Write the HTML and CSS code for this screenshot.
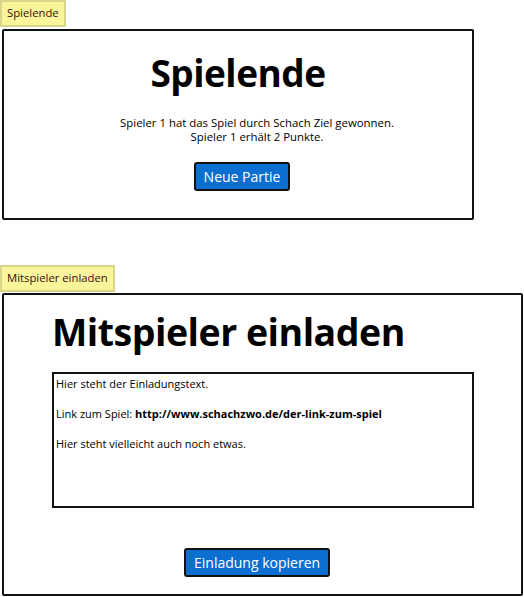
FILE: index.html
```html
<!DOCTYPE html>
<html lang="de">
<head>
<meta charset="utf-8">
<title>Spielende</title>
<link rel="stylesheet" href="styles.css">
</head>
<body>
<div class="page">
  <div class="label">Spielende</div>
  <section class="panel panel-end">
    <h1 class="title title-center">Spielende</h1>
    <p class="msg">Spieler 1 hat das Spiel durch Schach Ziel gewonnen.<br>Spieler 1 erhält 2 Punkte.</p>
    <div class="btn-row"><button class="btn">Neue Partie</button></div>
  </section>

  <div class="label label-2">Mitspieler einladen</div>
  <section class="panel panel-invite">
    <h1 class="title title-left">Mitspieler einladen</h1>
    <div class="textbox">
      <p>Hier steht der Einladungstext.</p>
      <p>Link zum Spiel: <b>http://www.schachzwo.de/der-link-zum-spiel</b></p>
      <p>Hier steht vielleicht auch noch etwas.</p>
    </div>
    <div class="btn-row-2"><button class="btn">Einladung kopieren</button></div>
  </section>
</div>
</body>
</html>
```

FILE: styles.css
```css
* { box-sizing: border-box; }
html, body { margin: 0; padding: 0; background: #fff; }
body {
  font-family: "Open Sans", "Noto Sans", sans-serif;
  color: #000;
  width: 524px;
  height: 597px;
  overflow: hidden;
}
.page {
  display: flex;
  flex-direction: column;
  align-items: flex-start;
}
.label {
  background: #f8f59b;
  border: 2px solid #d9d68c;
  color: #3a0d0d;
  font-size: 11.3px;
  line-height: 14px;
  padding: 4px 5px 5px 5px;
  height: 27px;
  display: flex;
  align-items: center;
}
.label-2 { margin-top: 45px; height: 27px; }
.panel {
  margin-top: 2px;
  margin-left: 2px;
  border: 2px solid #111;
  border-radius: 2px;
  display: flex;
  flex-direction: column;
}
.panel-end { width: 472px; height: 191px; align-items: center; }
.panel-invite { width: 521px; height: 303px; padding-left: 48px; margin-top: 1px; }
.title {
  margin: 0;
  font-weight: 700;
  letter-spacing: -0.5px;
}
.title-center { font-size: 37px; line-height: 44px; margin-top: 20px; }
.title-left { font-size: 37.5px; line-height: 44px; margin-top: 15px; }
.msg {
  margin: 21px 0 0 38px;
  font-size: 11.4px;
  line-height: 14px;
  text-align: center;
}
.btn-row { display: flex; justify-content: center; margin-top: 18px; margin-left: 8px; }
.btn {
  font-family: inherit;
  background: #0b6fd2;
  color: #fff;
  border: 2px solid #111;
  border-radius: 3px;
  font-size: 14px;
  line-height: 18px;
  height: 29px;
  padding: 0 8px;
}
.textbox {
  margin-top: 18px;
  width: 422px;
  height: 136px;
  border: 2px solid #111;
  padding: 2px 2px;
  font-size: 11px;
  line-height: 15px;
}
.textbox p { margin: 0 0 15px 0; }
.btn-row-2 { display: flex; margin-top: 40px; margin-left: 132px; }
```
